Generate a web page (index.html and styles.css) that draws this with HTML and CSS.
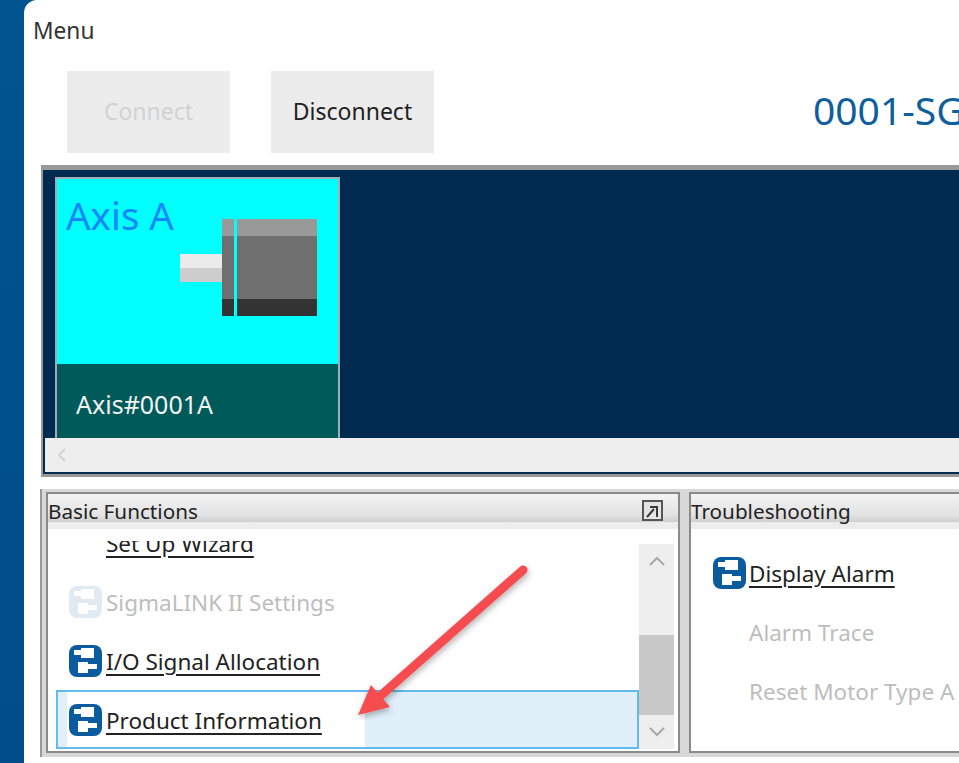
FILE: index.html
```html
<!DOCTYPE html>
<html lang="en">
<head>
<meta charset="utf-8">
<title>Menu</title>
<link rel="stylesheet" href="styles.css">
</head>
<body>
<svg class="defs" width="0" height="0" aria-hidden="true">
  <symbol id="fn" viewBox="0 0 33 32">
    <rect width="33" height="32" rx="8" fill="#0b5c9e"/>
    <path d="M5 5H12V3H25V13H12V10H5Z" fill="#fff"/>
    <path d="M9 17H19V19H28V24H19V28H9Z" fill="#fff"/>
  </symbol>
</svg>
<div class="page">
  <aside class="desktop"></aside>
  <main class="window">
    <div class="menubar">Menu</div>
    <div class="toolbar">
      <button class="btn" disabled>Connect</button>
      <button class="btn">Disconnect</button>
      <h1 class="title">0001-SG</h1>
    </div>
    <section class="axes">
      <div class="axes-view">
        <div class="card">
          <div class="card-top">
            <span class="axis-name">Axis A</span>
            <svg class="motor" width="137" height="98" viewBox="0 0 137 98">
              <rect x="0" y="35" width="42" height="14" fill="#ebebeb"/>
              <rect x="0" y="49" width="42" height="14" fill="#cdcdcd"/>
              <rect x="42" y="0" width="12" height="17" fill="#999"/>
              <rect x="42" y="17" width="12" height="63" fill="#6f6f6f"/>
              <rect x="42" y="80" width="12" height="17" fill="#333"/>
              <rect x="57" y="0" width="80" height="17" fill="#999"/>
              <rect x="57" y="17" width="80" height="63" fill="#6f6f6f"/>
              <rect x="57" y="80" width="80" height="17" fill="#333"/>
            </svg>
          </div>
          <div class="card-foot">Axis#0001A</div>
        </div>
      </div>
      <div class="hscroll">
        <svg width="12" height="16" viewBox="0 0 12 16"><path d="M9 2 3 8l6 6" fill="none" stroke="#d4d4d4" stroke-width="2"/></svg>
      </div>
    </section>
    <section class="panels">
      <div class="panel panel-basic">
        <header class="panel-head">
          <span>Basic Functions</span>
          <svg class="expand" width="21" height="21" viewBox="0 0 21 21">
            <rect x="1" y="1" width="19" height="19" fill="#e4e4e4" stroke="#555" stroke-width="2"/>
            <path d="M5 17 12 9M8 7h6M15 6v11" fill="none" stroke="#3a3a3a" stroke-width="2"/>
          </svg>
        </header>
        <div class="panel-body">
          <div class="viewport">
            <ul class="list list-scrolled">
              <li class="row"><span class="spacer"></span><a class="link">Set Up Wizard</a></li>
              <li class="row is-off"><svg class="icon"><use href="#fn"/></svg><span class="label">SigmaLINK II Settings</span></li>
              <li class="row"><svg class="icon"><use href="#fn"/></svg><a class="link">I/O Signal Allocation</a></li>
              <li class="row is-selected"><svg class="icon"><use href="#fn"/></svg><a class="link">Product Information</a></li>
            </ul>
          </div>
          <div class="vscroll">
            <div class="vtrack">
              <svg width="20" height="12" viewBox="0 0 20 12"><path d="M3 10 10 3l7 7" fill="none" stroke="#a8a8a8" stroke-width="2"/></svg>
            </div>
            <div class="vthumb"></div>
            <div class="vbtn">
              <svg width="20" height="12" viewBox="0 0 20 12"><path d="M3 2l7 7 7-7" fill="none" stroke="#a8a8a8" stroke-width="2"/></svg>
            </div>
          </div>
        </div>
      </div>
      <div class="panel panel-trouble">
        <header class="panel-head"><span>Troubleshooting</span></header>
        <div class="panel-body">
          <ul class="list list-plain">
            <li class="row"><svg class="icon"><use href="#fn"/></svg><a class="link">Display Alarm</a></li>
            <li class="row is-off"><span class="spacer"></span><span class="label">Alarm Trace</span></li>
            <li class="row is-off"><span class="spacer"></span><span class="label">Reset Motor Type A</span></li>
          </ul>
        </div>
      </div>
    </section>
  </main>
  <svg class="arrow" width="190" height="170" viewBox="0 0 190 170">
    <defs>
      <filter id="shadow" x="-20%" y="-20%" width="140%" height="140%">
        <feDropShadow dx="1" dy="3" stdDeviation="3" flood-color="#000" flood-opacity=".3"/>
      </filter>
    </defs>
    <g filter="url(#shadow)">
      <path d="M173 20 28 148" fill="none" stroke="#f64b4f" stroke-width="9" stroke-linecap="round"/>
      <path d="M8 165 21 135 40 157Z" fill="#f64b4f"/>
    </g>
  </svg>
</div>
</body>
</html>
```
FILE: styles.css
```css
* { box-sizing: border-box; }
html, body { margin: 0; padding: 0; }
body {
  width: 959px;
  height: 763px;
  overflow: hidden;
  background: #fff;
  font-family: "Noto Sans", "Open Sans", sans-serif;
  color: #222;
}
.defs { position: absolute; }
.page { position: relative; display: flex; width: 959px; height: 763px; overflow: hidden; background: linear-gradient(180deg, #00548f, #004d89); }
.desktop { flex: 0 0 24px; }
.window {
  flex: 0 0 935px;
  height: 763px;
  overflow: hidden;
  background: #fff;
  border-top-left-radius: 13px;
}
.menubar { height: 71px; padding: 17px 0 0 9px; font-size: 22.7px; line-height: 28px; color: #333; }
.toolbar { display: flex; align-items: center; height: 82px; padding-left: 43px; }
.btn {
  flex: none;
  width: 163px;
  height: 82px;
  margin-right: 41px;
  border: 0;
  background: #ececec;
  font: inherit;
  font-size: 23px;
  color: #222;
  padding: 0 0 3px;
}
.btn:disabled { color: #d2d2d2; }
.title {
  flex: none;
  margin: 0 0 5px 338px;
  font-size: 39px;
  font-weight: 400;
  color: #0f5f9c;
  white-space: nowrap;
}
.axes {
  width: 930px;
  height: 312px;
  margin: 12px 0 0 17px;
  border: solid #999;
  border-width: 5px 0 3px 2px;
  background: #002a50;
}
.axes-view { height: 268px; padding: 7px 0 0 10px; overflow: hidden; border-left: 2px solid #002a50; }
.card { width: 285px; height: 261px; border: 2px solid #a3acb5; border-bottom: 0; background: #00ffff; display: flex; flex-direction: column; }
.card-top { flex: 0 0 185px; display: flex; justify-content: space-between; padding: 40px 21px 0 9px; }
.axis-name { font-size: 38.5px; line-height: 46px; margin-top: -27px; color: #1785ff; height: 46px; }
.card-foot { flex: 1; padding: 26px 0 0 19px; background: #005a5a; color: #f2f2f2; font-size: 25px; line-height: 28px; }
.hscroll { height: 34px; margin-left: 2px; background: #eee; display: flex; align-items: center; padding-left: 11px; }
.panels {
  display: flex;
  width: 930px;
  height: 268px;
  margin: 12px 0 0 16px;
  padding: 3px 0 4px 4px;
  background: #d8d8d8;
  border-left: 2px solid #999;
}
.panel { flex: none; display: flex; flex-direction: column; background: #fff; border: 2px solid #8a8a8a; }
.panel-basic { width: 634px; margin-right: 9px; }
.panel-trouble { width: 400px; border-right: 0; }
.panel-head {
  flex: 0 0 35px;
  display: flex;
  justify-content: space-between;
  align-items: center;
  padding: 0 15px 2px 0;
  font-size: 20.7px;
  color: #222;
  background: linear-gradient(180deg, #f4f4f4 0, #e2e2e2 60%, #cfcfcf 80%, #ececec 81%, #ececec 100%);
}
.expand { flex: none; }
.panel-body { flex: 1; display: flex; overflow: hidden; min-height: 0; }
.viewport { flex: 0 0 591px; margin-top: 12px; overflow: hidden; }
.list { list-style: none; margin: 0; padding: 0; font-size: 22.5px; }
.list-scrolled { margin-top: -28px; padding-left: 8px; }
.list-plain { flex: 1; padding: 14px 0 0 22px; }
.row { display: flex; align-items: center; height: 59px; padding-left: 13px; gap: 4px; color: #222; }
.list-plain .row { padding-left: 0; gap: 3px; }
.row.is-off { color: #bdbdbd; }
.row.is-off .icon { opacity: .12; }
.row.is-selected {
  border: 2px solid #62bbec;
  padding-left: 11px;
  background: linear-gradient(90deg, #e0f0fa 0 9px, #fff 9px 307px, #e0f0fa 307px);
}
.icon { flex: none; width: 33px; height: 32px; }
.spacer { flex: none; width: 33px; }
.label, .link { padding-top: 2px; }
.link { color: #222; text-decoration: underline; text-underline-offset: 4px; }
.vscroll { flex: 0 0 35px; display: flex; flex-direction: column; margin-top: 15px; margin-bottom: 2px; background: #eee; }
.vtrack { flex: 0 0 91px; display: flex; justify-content: center; padding-top: 11px; }
.vthumb { flex: 0 0 80px; background: #c8c8c8; }
.vbtn { flex: 1; display: flex; justify-content: center; align-items: center; }
.arrow { position: absolute; left: 350px; top: 550px; pointer-events: none; }
```
